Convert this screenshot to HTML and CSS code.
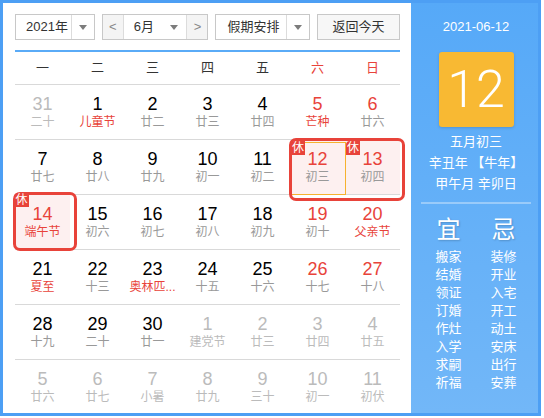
FILE: index.html
```html
<!DOCTYPE html>
<html lang="zh">
<head>
<meta charset="utf-8">
<title>万年历</title>
<link rel="stylesheet" href="styles.css">
</head>
<body>
<div class="cal">
  <div class="main">
    <div class="toolbar">
      <div class="select year"><span class="val">2021年</span><span class="drop"><i class="arrow"></i></span></div>
      <div class="select month"><span class="btn">&lt;</span><span class="val">6月<i class="arrow"></i></span><span class="btn">&gt;</span></div>
      <div class="select holiday"><span class="val">假期安排</span><span class="drop"><i class="arrow"></i></span></div>
      <div class="today-btn">返回今天</div>
    </div>
    <div class="rule"></div>
    <div class="weekdays">
      <span>一</span><span>二</span><span>三</span><span>四</span><span>五</span><span class="red">六</span><span class="red">日</span>
    </div>
    <div class="week">
      <div class="day other"><b>31</b><em>二十</em></div>
      <div class="day"><b>1</b><em class="fest">儿童节</em></div>
      <div class="day"><b>2</b><em>廿二</em></div>
      <div class="day"><b>3</b><em>廿三</em></div>
      <div class="day"><b>4</b><em>廿四</em></div>
      <div class="day wk"><b>5</b><em class="fest">芒种</em></div>
      <div class="day wk"><b>6</b><em>廿六</em></div>
    </div>
    <div class="week">
      <div class="day"><b>7</b><em>廿七</em></div>
      <div class="day"><b>8</b><em>廿八</em></div>
      <div class="day"><b>9</b><em>廿九</em></div>
      <div class="day"><b>10</b><em>初一</em></div>
      <div class="day"><b>11</b><em>初二</em></div>
      <div class="day wk rest pair-start today"><span class="badge">休</span><b>12</b><em>初三</em></div>
      <div class="day wk rest"><span class="badge">休</span><b>13</b><em>初四</em></div>
    </div>
    <div class="week">
      <div class="day wk rest single"><span class="badge">休</span><b>14</b><em class="fest">端午节</em></div>
      <div class="day"><b>15</b><em>初六</em></div>
      <div class="day"><b>16</b><em>初七</em></div>
      <div class="day"><b>17</b><em>初八</em></div>
      <div class="day"><b>18</b><em>初九</em></div>
      <div class="day wk"><b>19</b><em>初十</em></div>
      <div class="day wk"><b>20</b><em class="fest">父亲节</em></div>
    </div>
    <div class="week">
      <div class="day"><b>21</b><em class="fest">夏至</em></div>
      <div class="day"><b>22</b><em>十三</em></div>
      <div class="day"><b>23</b><em class="fest">奥林匹...</em></div>
      <div class="day"><b>24</b><em>十五</em></div>
      <div class="day"><b>25</b><em>十六</em></div>
      <div class="day wk"><b>26</b><em>十七</em></div>
      <div class="day wk"><b>27</b><em>十八</em></div>
    </div>
    <div class="week">
      <div class="day"><b>28</b><em>十九</em></div>
      <div class="day"><b>29</b><em>二十</em></div>
      <div class="day"><b>30</b><em>廿一</em></div>
      <div class="day other"><b>1</b><em>建党节</em></div>
      <div class="day other"><b>2</b><em>廿三</em></div>
      <div class="day other"><b>3</b><em>廿四</em></div>
      <div class="day other"><b>4</b><em>廿五</em></div>
    </div>
    <div class="week last">
      <div class="day other"><b>5</b><em>廿六</em></div>
      <div class="day other"><b>6</b><em>廿七</em></div>
      <div class="day other"><b>7</b><em>小暑</em></div>
      <div class="day other"><b>8</b><em>廿九</em></div>
      <div class="day other"><b>9</b><em>三十</em></div>
      <div class="day other"><b>10</b><em>初一</em></div>
      <div class="day other"><b>11</b><em>初伏</em></div>
    </div>
  </div>
  <div class="side">
    <div class="date">2021-06-12</div>
    <div class="bigday">12</div>
    <div class="lunar">
      <div>五月初三</div>
      <div>辛丑年 【牛年】</div>
      <div>甲午月 辛卯日</div>
    </div>
    <div class="sep"></div>
    <div class="yiji">
      <div class="col">
        <div class="head">宜</div>
        <div>搬家</div><div>结婚</div><div>领证</div><div>订婚</div><div>作灶</div><div>入学</div><div>求嗣</div><div>祈福</div>
      </div>
      <div class="col">
        <div class="head">忌</div>
        <div>装修</div><div>开业</div><div>入宅</div><div>开工</div><div>动土</div><div>安床</div><div>出行</div><div>安葬</div>
      </div>
    </div>
  </div>
</div>
</body>
</html>
```
FILE: styles.css
```css
* { box-sizing: border-box; }
body {
  margin: 0;
  background: #fff;
  font-family: "Liberation Sans", "Noto Sans CJK SC", sans-serif;
}
.cal {
  display: flex;
  width: 541px;
  height: 416px;
  border: 3px solid #4d9ff4;
}
.main {
  width: 408px;
  padding: 11px 11px 0 12px;
  background: #fff;
}
.toolbar {
  display: flex;
  gap: 7px;
  height: 26px;
}
.select {
  display: flex;
  height: 26px;
  border: 1px solid #c8c8c8;
  background: #fff;
  font-size: 13px;
  color: #333;
}
.select .val {
  display: flex;
  align-items: center;
  line-height: 24px;
}
.select .drop {
  display: flex;
  align-items: center;
  justify-content: center;
  width: 22px;
  border-left: 1px solid #dcdcdc;
}
.arrow {
  display: block;
  width: 0;
  height: 0;
  border-top: 5px solid #7c7c7c;
  border-left: 4px solid transparent;
  border-right: 4px solid transparent;
}
.year { width: 80px; }
.year .val { width: 55px; padding-left: 10px; }
.month { width: 107px; }
.month .btn {
  width: 21px;
  background: #f4f4f4;
  color: #888;
  text-align: center;
  line-height: 24px;
  font-size: 13px;
}
.month .btn:first-child { border-right: 1px solid #dcdcdc; }
.month .btn:last-child { border-left: 1px solid #dcdcdc; }
.month .val {
  flex: 1;
  padding-left: 10px;
  padding-right: 8px;
  justify-content: space-between;
}
.holiday { width: 95px; }
.holiday .val { width: 70px; padding-left: 11px; }
.today-btn {
  width: 83px;
  height: 26px;
  border: 1px solid #c8c8c8;
  background: #f7f7f7;
  font-size: 13px;
  color: #333;
  text-align: center;
  line-height: 24px;
}
.rule {
  margin-top: 10px;
  height: 2px;
  width: 385px;
  background: #5aabf7;
}
.weekdays {
  display: grid;
  grid-template-columns: repeat(7, 55px);
  height: 33px;
  border-bottom: 1px solid #d9d9d9;
  font-size: 13px;
  color: #333;
  line-height: 32px;
  text-align: center;
}
.red { color: #e8433a; }
.week {
  display: grid;
  grid-template-columns: repeat(7, 55px);
  height: 55px;
  border-bottom: 1px solid #d9d9d9;
}
.week.last { border-bottom: none; height: 53px; }
.day {
  position: relative;
  padding-top: 9px;
  text-align: center;
}
.day b {
  display: block;
  font-weight: normal;
  font-size: 18px;
  line-height: 20px;
  color: #000;
}
.day em {
  display: block;
  font-style: normal;
  font-size: 12px;
  line-height: 16px;
  color: #999;
  white-space: nowrap;
}
.day em.fest { color: #e8433a; }
.day.wk b { color: #e8433a; }
.day.other b { color: #bbb; }
.day.other em { color: #bbb; }
.day.rest { background: #fdf0f0; }
.day.rest.pair-start::after {
  content: "";
  position: absolute;
  z-index: 2;
  left: -1px;
  top: -2px;
  width: 110px;
  height: 57px;
  border: 3px solid #e8433a;
  border-radius: 7px;
}
.day.today::before {
  content: "";
  position: absolute;
  z-index: 1;
  left: 1px;
  top: 2px;
  width: 53px;
  height: 51px;
  border: 1.5px solid #f6b22f;
}
.day.rest.single::after {
  content: "";
  position: absolute;
  z-index: 2;
  left: -2px;
  top: -3px;
  width: 58px;
  height: 53px;
  border: 3px solid #e8433a;
  border-radius: 7px;
}
.badge {
  position: absolute;
  z-index: 3;
  left: 1px;
  top: 1px;
  width: 14px;
  height: 14px;
  background: #e8433a;
  color: #fff;
  font-size: 12px;
  line-height: 14px;
  text-align: center;
  border-top-left-radius: 4px;
}
.single .badge { left: -1px; top: -2px; width: 15px; }
.side {
  width: 127px;
  padding-left: 3px;
  background: linear-gradient(#56a9f8, #72b7f8);
  color: #fff;
  text-align: center;
  display: flex;
  flex-direction: column;
  align-items: center;
}
.date {
  padding-top: 16px;
  font-size: 13px;
  line-height: 16px;
}
.bigday {
  margin-top: 17px;
  width: 75px;
  height: 75px;
  background: #f8b933;
  border-radius: 3px;
  box-shadow: 0 1px 3px rgba(0,0,0,0.15);
  font-family: Roboto, "Liberation Sans", sans-serif;
  font-weight: 300;
  font-size: 52px;
  line-height: 75px;
}
.lunar {
  margin-top: 4px;
  font-size: 13px;
  line-height: 21px;
  white-space: nowrap;
}
.sep {
  margin-top: 8px;
  width: 110px;
  height: 2px;
  background: rgba(255,255,255,0.35);
}
.yiji {
  display: flex;
  margin-top: 11px;
}
.col {
  width: 55px;
  font-size: 13px;
  line-height: 18px;
}
.col .head {
  font-size: 24px;
  line-height: 30px;
  margin-bottom: 3px;
  text-shadow: 1px 1px 2px rgba(0,0,0,0.2);
}
```
